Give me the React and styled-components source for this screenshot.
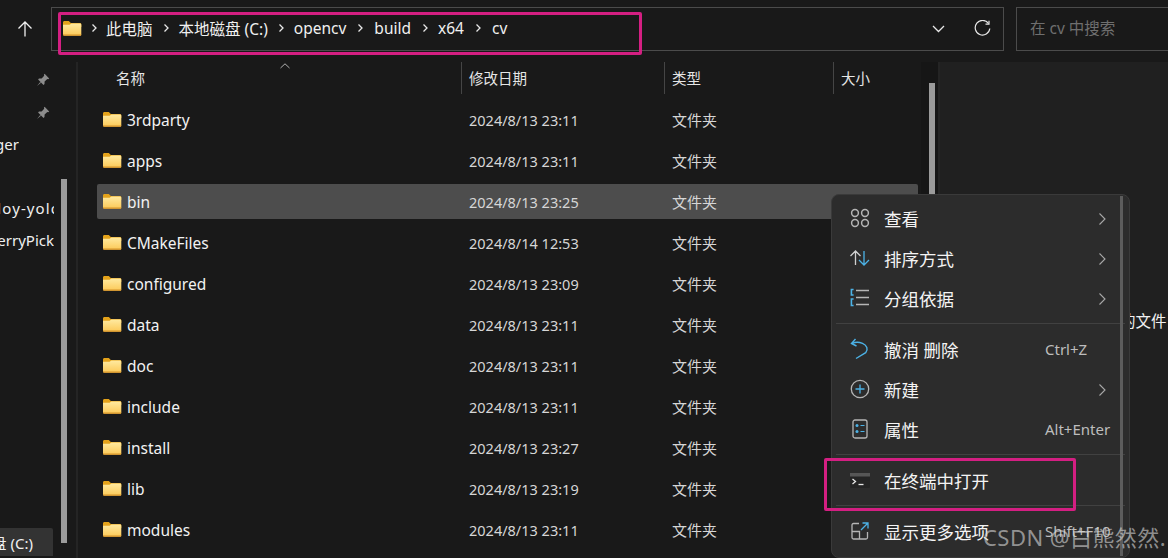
import React from "react";
import styled, { createGlobalStyle } from "styled-components";

const Global = createGlobalStyle`
  html, body { margin: 0; padding: 0; background: #191919; }
  * { box-sizing: border-box; }
  #root { width: 1168px; height: 558px; overflow: hidden; }
`;

const CJK = `"Noto Sans", "Noto Sans CJK SC", sans-serif`;

const Window = styled.div`
  position: relative;
  width: 1168px;
  height: 558px;
  overflow: hidden;
  background: #191919;
  color: #f2f2f2;
  font-family: ${CJK};
  font-size: 14.5px;
`;

const TopBar = styled.div`
  display: grid;
  grid-template-columns: 51px 953px 1fr;
  height: 62px;
  padding-top: 7px;
`;

const UpButton = styled.div`
  display: flex;
  justify-content: center;
  height: 43px;
  padding-top: 14px;
  padding-right: 2px;
`;

const AddressBar = styled.div`
  position: relative;
  display: flex;
  align-items: center;
  height: 44px;
  border: 1px solid #4b4b4b;
  padding-left: 10px;
  padding-bottom: 2px;
`;

const Crumb = styled.span`
  font-size: 15.5px;
  color: #f0f0f0;
  white-space: nowrap;
`;

const Sep = styled.span`
  display: flex;
  justify-content: center;
  width: ${(p) => p.$w}px;
`;

const AddressTools = styled.div`
  margin-left: auto;
  display: flex;
  align-items: center;
  gap: 29px;
  padding-right: 12px;
  padding-top: 1px;
`;

const Highlight = styled.div`
  position: absolute;
  left: ${(p) => p.$x}px;
  top: ${(p) => p.$y}px;
  width: ${(p) => p.$w}px;
  height: ${(p) => p.$h}px;
  border: 3px solid #d41f82;
  border-radius: 2px;
  z-index: 5;
  pointer-events: none;
`;

const SearchBox = styled.div`
  margin-left: 12px;
  height: 44px;
  border: 1px solid #4b4b4b;
  border-right: none;
  padding-left: 13px;
  padding-bottom: 3px;
  display: flex;
  align-items: center;
  font-size: 15.5px;
  color: #6f6f6f;
  white-space: nowrap;
`;

const Body = styled.div`
  display: grid;
  grid-template-columns: 76px 862px 1fr;
  height: 496px;
`;

const Sidebar = styled.div`
  display: grid;
  grid-template-columns: 61px 6px 9px;
  background: #191919;
  border-right: 2px solid #242424;
  width: 78px;
`;

const SideList = styled.div`
  display: flex;
  flex-direction: column;
  padding-top: 1px;
`;

const PinRow = styled.div`
  display: flex;
  justify-content: flex-end;
  padding-right: 11px;
  height: 33px;
  align-items: center;
`;

const SideRow = styled.div`
  display: flex;
  justify-content: flex-end;
  align-items: center;
  height: 32px;
  width: ${(p) => p.$w || 54}px;
  overflow: hidden;
  font-size: 15px;
  color: #f0f0f0;
  white-space: nowrap;
  margin-top: ${(p) => p.$top || 0}px;
`;

const Clipped = styled.span`
  flex: none;
  margin-right: ${(p) => -(p.$bleed || 0)}px;
  letter-spacing: ${(p) => p.$spread || 0}px;
`;

const SideDrive = styled(SideRow)`
  background: #333333;
  height: 28px;
  border-radius: 0 2px 0 0;
  padding-right: 20px;
  width: 53px;
`;

const SideTrack = styled.div`
  padding-top: 117px;
`;

const SideThumb = styled.div`
  height: 364px;
  background: #9b9b9b;
`;

const Files = styled.div`
  display: flex;
  flex-direction: column;
  padding-left: 21px;
  position: relative;
`;

const SortCaret = styled.div`
  position: absolute;
  left: 204px;
  top: 1px;
  line-height: 0;
`;

const Header = styled.div`
  display: grid;
  grid-template-columns: 364px 203px 169px 1fr;
  height: 32px;
  margin-bottom: 8px;
`;

const HeadCell = styled.div`
  display: flex;
  align-items: center;
  padding-left: ${(p) => p.$pad ?? 7}px;
  padding-bottom: 2px;
  border-left: ${(p) => (p.$first ? "none" : "1px solid #454545")};
  font-size: 14.5px;
  color: #e6e6e6;
`;

const Row = styled.div`
  display: grid;
  grid-template-columns: 364px 203px 1fr;
  align-items: center;
  width: 821px;
  height: 35px;
  margin-bottom: 6px;
  border-radius: 2px;
  background: ${(p) => (p.$selected ? "#4d4d4d" : "transparent")};
  flex: none;
`;

const NameCell = styled.div`
  display: flex;
  align-items: center;
  gap: 5px;
  padding-left: 5px;
  font-size: 15.5px;
  color: #f2f2f2;
`;

const DateCell = styled.div`
  padding-left: 8px;
  font-size: 14.5px;
  color: #d6d6d6;
`;

const TypeCell = styled.div`
  padding-left: 8px;
  padding-bottom: 1px;
  font-size: 15px;
  color: #d6d6d6;
`;

const ListTrack = styled.div`
  position: absolute;
  right: 3px;
  top: 21px;
  width: 6px;
  height: 100%;
  background: #9b9b9b;
`;

const ListEdge = styled.div`
  position: absolute;
  right: 0;
  top: 0;
  bottom: 0;
  width: 17px;
  background: #161616;
`;

const Preview = styled.div`
  background: #202020;
  border-left: 2px solid #242424;
  position: relative;
  overflow: hidden;
  display: flex;
  justify-content: flex-end;
  padding-top: 247px;
  font-size: 15.5px;
  color: #f0f0f0;
  white-space: nowrap;
`;

const Menu = styled.div`
  position: absolute;
  left: 831px;
  top: 194px;
  width: 299px;
  height: 364px;
  background: #2c2c2c;
  border: 1px solid #3a3a3a;
  border-radius: 8px;
  padding-top: 3px;
  z-index: 3;
`;

const MenuThumb = styled.div`
  position: absolute;
  left: 288px;
  top: 1px;
  width: 3px;
  height: 360px;
  background: #5c5c5c;
`;

const MenuRow = styled.div`
  display: grid;
  grid-template-columns: 52px 161px 1fr;
  align-items: center;
  height: 40px;
`;

const MenuIcon = styled.div`
  display: flex;
  justify-content: center;
  padding-left: 8px;
  width: 48px;
`;

const MenuLabel = styled.div`
  font-size: 17.5px;
  color: #f4f4f4;
  white-space: nowrap;
`;

const Shortcut = styled.div`
  font-size: 15px;
  color: #bdbdbd;
  white-space: nowrap;
`;

const ArrowCell = styled.div`
  display: flex;
  padding-left: 53px;
  padding-top: 1px;
`;

const MenuDivider = styled.div`
  height: 1px;
  margin: 5px 4px 5px 4px;
  background: #414141;
`;

const Watermark = styled.div`
  position: absolute;
  left: 983px;
  top: 520px;
  font-size: 22px;
  letter-spacing: 0.45px;
  color: rgba(215, 215, 215, 0.62);
  white-space: nowrap;
  z-index: 6;
`;

const Folder = () => (
  <svg width="20" height="17" viewBox="0 0 20 17">
    <path d="M1 2.5C1 1.7 1.6 1 2.4 1h4.4l2 2H18c.8 0 1.3.6 1.3 1.3V7H1z" fill="#e4a21a" />
    <path d="M1 4.7h6.6l1.8-1.2H18c.8 0 1.3.6 1.3 1.3v9.6c0 .8-.6 1.3-1.3 1.3H2.4C1.6 15.7 1 15.1 1 14.3z" fill="url(#fg)" />
    <path d="M1 14.6h18.3v.2c0 .6-.6 1-1.3 1H2.4c-.8 0-1.4-.4-1.4-1z" fill="#d4932a" />
    <defs>
      <linearGradient id="fg" x1="0" y1="0" x2="0" y2="1">
        <stop offset="0" stopColor="#ffeaa0" />
        <stop offset="1" stopColor="#fcc957" />
      </linearGradient>
    </defs>
  </svg>
);

const Chevron = () => (
  <svg width="8" height="10" viewBox="0 0 8 10" fill="none" stroke="#e8e8e8" strokeWidth="1.3">
    <path d="M2.5 1.5 6 5 2.5 8.5" />
  </svg>
);

const BigChevron = () => (
  <svg width="9" height="14" viewBox="0 0 9 14" fill="none" stroke="#a8a8a8" strokeWidth="1.1">
    <path d="M1.5 1.5 7 7l-5.5 5.5" />
  </svg>
);

const Pin = () => (
  <svg width="14" height="14" viewBox="0 0 14 14" fill="#8c8c8c">
    <path d="M8.6 0.8 13.2 5.4 12.2 6.2 11.3 5.9 8.6 8.5 8.5 11 7.5 11.9 2.1 6.5 3 5.5 5.6 5.4 8.2 2.8 7.9 1.8z" />
    <path d="M4.2 9 1 13l4-3.2z" />
  </svg>
);

const files = [
  ["3rdparty", "2024/8/13 23:11"],
  ["apps", "2024/8/13 23:11"],
  ["bin", "2024/8/13 23:25", true],
  ["CMakeFiles", "2024/8/14 12:53"],
  ["configured", "2024/8/13 23:09"],
  ["data", "2024/8/13 23:11"],
  ["doc", "2024/8/13 23:11"],
  ["include", "2024/8/13 23:11"],
  ["install", "2024/8/13 23:27"],
  ["lib", "2024/8/13 23:19"],
  ["modules", "2024/8/13 23:11"],
];

const crumbs = [
  ["此电脑", 26],
  ["本地磁盘 (C:)", 26],
  ["opencv", 28],
  ["build", 27],
  ["x64", 28],
  ["cv", 0],
];

const BLUE = "#4cb2e6";
const GREY = "#b5b5b5";

const IconView = () => (
  <svg width="20" height="20" viewBox="0 0 20 20" fill="none" stroke={GREY} strokeWidth="1.5">
    <circle cx="5" cy="5" r="3.4" /><circle cx="15" cy="5" r="3.4" />
    <circle cx="5" cy="15" r="3.4" /><circle cx="15" cy="15" r="3.4" />
  </svg>
);
const IconSort = () => (
  <svg width="22" height="20" viewBox="0 0 22 20" fill="none" strokeWidth="1.3">
    <path d="M6.5 17V3M1.5 8l5-5 5 5" stroke="#d0d0d0" />
    <path d="M15 3v14M10 12l5 5 5-5" stroke={BLUE} />
  </svg>
);
const IconGroup = () => (
  <svg width="20" height="20" viewBox="0 0 20 20" fill="none" strokeWidth="1.6">
    <path d="M3.6 1.5H1.4v5.5h2.2M3.6 11H1.4v6.5h2.2" stroke={BLUE} />
    <path d="M6 2.5h13M6 9.5h13M6 16.5h13" stroke={GREY} />
  </svg>
);
const IconUndo = () => (
  <svg width="20" height="22" viewBox="0 0 20 22" fill="none" stroke={BLUE} strokeWidth="1.4">
    <path d="M5.5 1 1.5 5.5 6.5 8" />
    <path d="M2 5.5c3-1.5 7-1.6 10.5-.2 4.5 1.9 6 6.2 3.2 9.4L6 20.5" />
  </svg>
);
const IconNew = () => (
  <svg width="20" height="20" viewBox="0 0 20 20" fill="none">
    <circle cx="10" cy="10" r="8.7" stroke={GREY} strokeWidth="1.3" />
    <path d="M10 5.5v9M5.5 10h9" stroke={BLUE} strokeWidth="1.3" />
  </svg>
);
const IconProps = () => (
  <svg width="16" height="20" viewBox="0 0 16 20" fill="none">
    <rect x="1" y="1" width="14" height="18" rx="2" stroke={GREY} strokeWidth="1.3" />
    <circle cx="5" cy="6.5" r="1.5" fill={BLUE} /><circle cx="5" cy="12.5" r="1.5" fill={BLUE} />
    <path d="M8.5 6.5H12.5M8.5 12.5H12.5" stroke={BLUE} strokeWidth="1.2" />
  </svg>
);
const IconTerminal = () => (
  <svg width="20" height="15" viewBox="0 0 20 15">
    <rect width="20" height="15" rx="1" fill="#242424" />
    <rect width="20" height="3.5" fill="#565656" />
    <path d="M2.5 6 5.5 8.5 2.5 11" fill="none" stroke="#e6e6e6" strokeWidth="1.3" />
    <path d="M8.5 11.5h5" stroke="#e6e6e6" strokeWidth="1.3" />
  </svg>
);
const IconMore = () => (
  <svg width="18" height="18" viewBox="0 0 18 18" fill="none" strokeWidth="1.3">
    <path d="M8 1.5H2.5A1.5 1.5 0 0 0 1 3v12.5A1.5 1.5 0 0 0 2.5 17h12.5a1.5 1.5 0 0 0 1.5-1.5V10" stroke={GREY} />
    <path d="M1 9.5h7.5V17" stroke={GREY} />
    <path d="M10 8 17 1M11.5 1H17v5.5" stroke={BLUE} />
  </svg>
);

const menu = [
  [
    { icon: <IconView />, label: "查看", arrow: true },
    { icon: <IconSort />, label: "排序方式", arrow: true },
    { icon: <IconGroup />, label: "分组依据", arrow: true },
  ],
  [
    { icon: <IconUndo />, label: "撤消 删除", short: "Ctrl+Z" },
    { icon: <IconNew />, label: "新建", arrow: true },
    { icon: <IconProps />, label: "属性", short: "Alt+Enter" },
  ],
  [{ icon: <IconTerminal />, label: "在终端中打开" }],
  [{ icon: <IconMore />, label: "显示更多选项", short: "Shift+F10" }],
];

export default function App() {
  return (
    <Window>
      <Global />
      <TopBar>
        <UpButton>
          <svg width="16" height="16" viewBox="0 0 16 16" fill="none" stroke="#f0f0f0" strokeWidth="1.3">
            <path d="M8 15.5V1M1.5 7.5 8 1l6.5 6.5" />
          </svg>
        </UpButton>
        <AddressBar>
          <Folder />
          <Sep $w={24}><Chevron /></Sep>
          {crumbs.map(([t, w]) => (
            <React.Fragment key={t}>
              <Crumb>{t}</Crumb>
              {w > 0 && <Sep $w={w}><Chevron /></Sep>}
            </React.Fragment>
          ))}
          <AddressTools>
            <svg width="13" height="8" viewBox="0 0 13 8" fill="none" stroke="#e8e8e8" strokeWidth="1.3">
              <path d="M1 1l5.5 5.5L12 1" />
            </svg>
            <svg width="17" height="17" viewBox="0 0 17 17" fill="none" stroke="#e8e8e8" strokeWidth="1.2">
              <path d="M14.5 3.5A7.3 7.3 0 1 0 15.8 8.5" />
              <path d="M15 .8v3.4h-3.5" />
            </svg>
          </AddressTools>
        </AddressBar>
        <SearchBox>在 cv 中搜索</SearchBox>
      </TopBar>
      <Body>
        <Sidebar>
          <SideList>
            <PinRow><Pin /></PinRow>
            <PinRow><Pin /></PinRow>
            <SideRow $w={19} $top={-1}><Clipped>Manager</Clipped></SideRow>
            <SideRow $top={32}><Clipped $bleed={25} $spread={1.1}>Deploy-yolov8</Clipped></SideRow>
            <SideRow><Clipped>CherryPick</Clipped></SideRow>
            <SideDrive $top={272}><Clipped>本地磁盘 (C:)</Clipped></SideDrive>
          </SideList>
          <SideTrack><SideThumb /></SideTrack>
          <div />
        </Sidebar>
        <Files>
          <SortCaret>
            <svg width="10" height="6" viewBox="0 0 10 6" fill="none" stroke="#b0b0b0" strokeWidth="1">
              <path d="M.5 5 5 .8 9.5 5" />
            </svg>
          </SortCaret>
          <Header>
            <HeadCell $first $pad={19}>名称</HeadCell>
            <HeadCell>修改日期</HeadCell>
            <HeadCell>类型</HeadCell>
            <HeadCell>大小</HeadCell>
          </Header>
          {files.map(([n, d, s]) => (
            <Row key={n} $selected={s}>
              <NameCell><Folder />{n}</NameCell>
              <DateCell>{d}</DateCell>
              <TypeCell>文件夹</TypeCell>
            </Row>
          ))}
          <ListEdge><ListTrack /></ListEdge>
        </Files>
        <Preview><Clipped $bleed={14}>选择要预览的文件，</Clipped></Preview>
      </Body>
      <Menu>
        <MenuThumb />
        {menu.map((group, i) => (
          <React.Fragment key={i}>
            {i > 0 && <MenuDivider />}
            {group.map((it) => (
              <MenuRow key={it.label}>
                <MenuIcon>{it.icon}</MenuIcon>
                <MenuLabel>{it.label}</MenuLabel>
                {it.arrow ? <ArrowCell><BigChevron /></ArrowCell> : <Shortcut>{it.short}</Shortcut>}
              </MenuRow>
            ))}
          </React.Fragment>
        ))}
      </Menu>
      <Highlight $x={58} $y={12} $w={584} $h={43} />
      <Highlight $x={824} $y={458} $w={252} $h={53} />
      <Watermark>CSDN @白熊然然.</Watermark>
    </Window>
  );
}
